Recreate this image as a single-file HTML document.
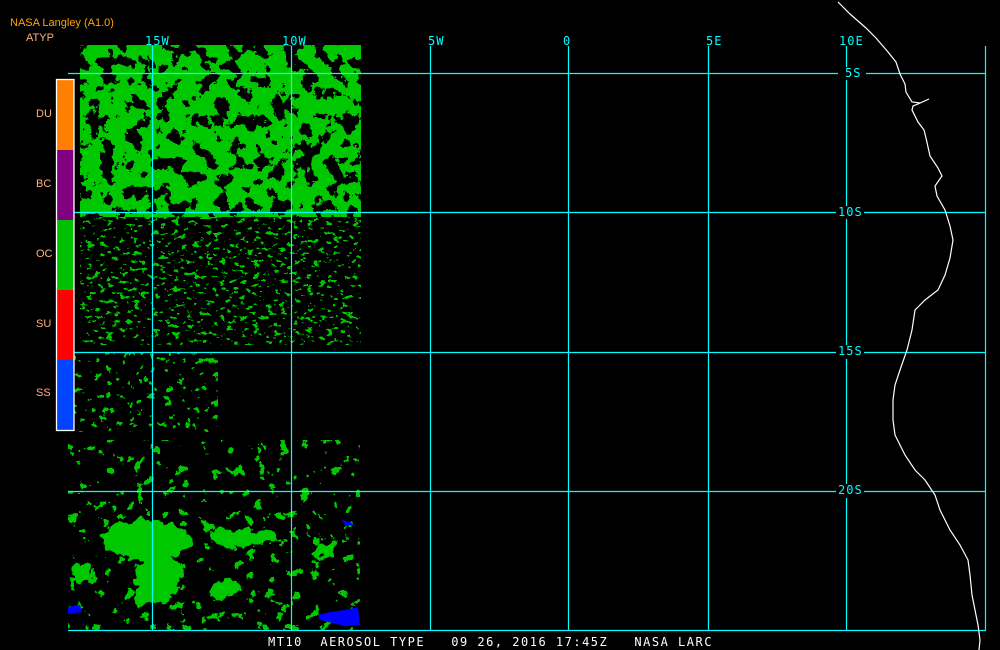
<!DOCTYPE html>
<html><head><meta charset="utf-8"><style>
html,body{margin:0;padding:0;background:#000;}
body{width:1000px;height:650px;position:relative;overflow:hidden;font-family:"DejaVu Sans Mono","Liberation Mono",monospace;}
.t{position:absolute;white-space:pre;line-height:1;}
.c{color:#00ffff;font-size:12px;}
.l{color:#ffb080;font-size:11px;font-family:"Liberation Sans",sans-serif;}
</style></head><body>
<svg width="1000" height="650" style="position:absolute;left:0;top:0">
<defs>
<filter id="d1" x="0" y="0" width="1" height="1">
<feTurbulence type="fractalNoise" baseFrequency="0.07" numOctaves="5" seed="3" result="n"/>
<feColorMatrix in="n" type="matrix" values="0 0 0 0 0  0 0 0 0 0  0 0 0 0 0  30 0 0 0 -12.5" result="a"/>
<feComponentTransfer in="a" result="b"><feFuncA type="discrete" tableValues="0 1"/></feComponentTransfer>
<feFlood flood-color="#00c800"/><feComposite operator="in" in2="b"/>
</filter>
<filter id="d2" x="0" y="0" width="1" height="1">
<feTurbulence type="fractalNoise" baseFrequency="0.15 0.25" numOctaves="3" seed="7" result="n"/>
<feColorMatrix in="n" type="matrix" values="0 0 0 0 0  0 0 0 0 0  0 0 0 0 0  30 0 0 0 -18.5" result="a"/>
<feComponentTransfer in="a" result="b"><feFuncA type="discrete" tableValues="0 1"/></feComponentTransfer>
<feFlood flood-color="#00c800"/><feComposite operator="in" in2="b"/>
</filter>
<filter id="d3" x="0" y="0" width="1" height="1">
<feTurbulence type="fractalNoise" baseFrequency="0.14" numOctaves="3" seed="11" result="n"/>
<feColorMatrix in="n" type="matrix" values="0 0 0 0 0  0 0 0 0 0  0 0 0 0 0  30 0 0 0 -19.5" result="a"/>
<feComponentTransfer in="a" result="b"><feFuncA type="discrete" tableValues="0 1"/></feComponentTransfer>
<feFlood flood-color="#00c800"/><feComposite operator="in" in2="b"/>
</filter>
<filter id="d4" x="0" y="0" width="1" height="1">
<feTurbulence type="fractalNoise" baseFrequency="0.09" numOctaves="4" seed="5" result="n"/>
<feColorMatrix in="n" type="matrix" values="0 0 0 0 0  0 0 0 0 0  0 0 0 0 0  30 0 0 0 -19.5" result="a"/>
<feComponentTransfer in="a" result="b"><feFuncA type="discrete" tableValues="0 1"/></feComponentTransfer>
<feFlood flood-color="#00c800"/><feComposite operator="in" in2="b"/>
</filter>
<filter id="rag" x="-20%" y="-20%" width="140%" height="140%">
<feTurbulence type="fractalNoise" baseFrequency="0.08" numOctaves="3" seed="2" result="n"/>
<feDisplacementMap in="SourceGraphic" in2="n" scale="18" xChannelSelector="R" yChannelSelector="G"/>
</filter>
</defs>
<rect x="80" y="45" width="281" height="172" fill="#fff" filter="url(#d1)"/>
<rect x="80" y="217" width="281" height="128" fill="#fff" filter="url(#d2)"/>
<rect x="68" y="352" width="150" height="80" fill="#fff" filter="url(#d3)"/>
<rect x="68" y="440" width="292" height="190" fill="#fff" filter="url(#d4)"/>
<g fill="#00c800" filter="url(#rag)">
<ellipse cx="145" cy="540" rx="45" ry="20"/>
<ellipse cx="160" cy="575" rx="25" ry="20"/>
<ellipse cx="245" cy="538" rx="35" ry="9"/>
<ellipse cx="150" cy="595" rx="18" ry="10"/>
<ellipse cx="82" cy="572" rx="10" ry="9"/>
<ellipse cx="325" cy="550" rx="10" ry="8"/>
<ellipse cx="225" cy="590" rx="15" ry="8"/>
</g>
<g fill="#0000ff">
<path d="M318 615 L330 612 L345 610 L358 607 L360 625 L345 626 L320 620Z"/>
<path d="M68 607 L80 605 L82 612 L68 614Z"/>
<path d="M342 520 L350 522 L356 526 L345 525Z"/>
</g>
<g stroke="#00ffff" stroke-width="1.2">
<line x1="68" y1="73.5" x2="838" y2="73.5"/><line x1="866" y1="73.5" x2="986" y2="73.5"/>
<line x1="68" y1="212.5" x2="836" y2="212.5"/><line x1="864" y1="212.5" x2="986" y2="212.5"/>
<line x1="68" y1="352.5" x2="836" y2="352.5"/><line x1="864" y1="352.5" x2="986" y2="352.5"/>
<line x1="68" y1="491.5" x2="836" y2="491.5"/><line x1="864" y1="491.5" x2="986" y2="491.5"/>
<line x1="68" y1="630.5" x2="986" y2="630.5"/>
<line x1="152.5" y1="46" x2="152.5" y2="630"/>
<line x1="291.5" y1="46" x2="291.5" y2="630"/>
<line x1="430.5" y1="46" x2="430.5" y2="630"/>
<line x1="568.5" y1="46" x2="568.5" y2="630"/>
<line x1="708.5" y1="46" x2="708.5" y2="630"/>
<line x1="846.5" y1="46" x2="846.5" y2="67"/><line x1="846.5" y1="80" x2="846.5" y2="206"/><line x1="846.5" y1="219" x2="846.5" y2="345"/><line x1="846.5" y1="359" x2="846.5" y2="484"/><line x1="846.5" y1="498" x2="846.5" y2="630"/>
<line x1="985.5" y1="46" x2="985.5" y2="630"/>
</g>
<polyline fill="none" stroke="#fff" stroke-width="1.2" points="838,2 850,14 866,28 876,38 888,52 896,62 900,74 905,84 906,92 912,102 920,103 929,99 918,104 913,106 912,110 918,122 924,130 926,138 930,156 938,168 942,176 935,186 937,196 945,210 950,226 953,240 950,258 945,275 938,290 925,300 915,310 912,330 907,350 900,370 895,385 893,400 893,420 895,435 905,455 915,470 925,480 935,495 940,510 950,530 960,545 968,560 970,575 972,595 975,610 978,625 980,640 979,650"/>
<rect x="56" y="79" width="18" height="71" fill="#ff8000"/>
<rect x="56" y="150" width="18" height="70" fill="#800080"/>
<rect x="56" y="220" width="18" height="70" fill="#00c000"/>
<rect x="56" y="290" width="18" height="70" fill="#ff0000"/>
<rect x="56" y="360" width="18" height="70" fill="#0044ff"/>
<rect x="56.5" y="79.5" width="17.5" height="351" fill="none" stroke="#fff" stroke-width="1.3"/>
</svg>
<div class="t" style="left:10px;top:18px;color:#ffa500;font-size:11px;font-family:'Liberation Sans',sans-serif">NASA Langley (A1.0)</div>
<div class="t l" style="left:26px;top:33px">ATYP</div>
<div class="t l" style="left:36px;top:109px">DU</div>
<div class="t l" style="left:36px;top:179px">BC</div>
<div class="t l" style="left:36px;top:249px">OC</div>
<div class="t l" style="left:36px;top:319px">SU</div>
<div class="t l" style="left:36px;top:388px">SS</div>
<div class="t c" style="left:145px;top:35px;letter-spacing:1px">15W</div>
<div class="t c" style="left:282px;top:35px;letter-spacing:1px">10W</div>
<div class="t c" style="left:428px;top:35px;letter-spacing:1px">5W</div>
<div class="t c" style="left:563px;top:35px">0</div>
<div class="t c" style="left:706px;top:35px;letter-spacing:1px">5E</div>
<div class="t c" style="left:839px;top:35px;letter-spacing:1px">10E</div>
<div class="t c" style="left:845px;top:67px;letter-spacing:1px">5S</div>
<div class="t c" style="left:838px;top:206px;letter-spacing:1px">10S</div>
<div class="t c" style="left:838px;top:345px;letter-spacing:1px">15S</div>
<div class="t c" style="left:838px;top:484px;letter-spacing:1px">20S</div>
<div class="t" style="left:268px;top:636px;color:#fff;font-size:12px;letter-spacing:1.5px">MT10  AEROSOL TYPE   09 26, 2016 17:45Z   NASA LARC</div>
</body></html>
